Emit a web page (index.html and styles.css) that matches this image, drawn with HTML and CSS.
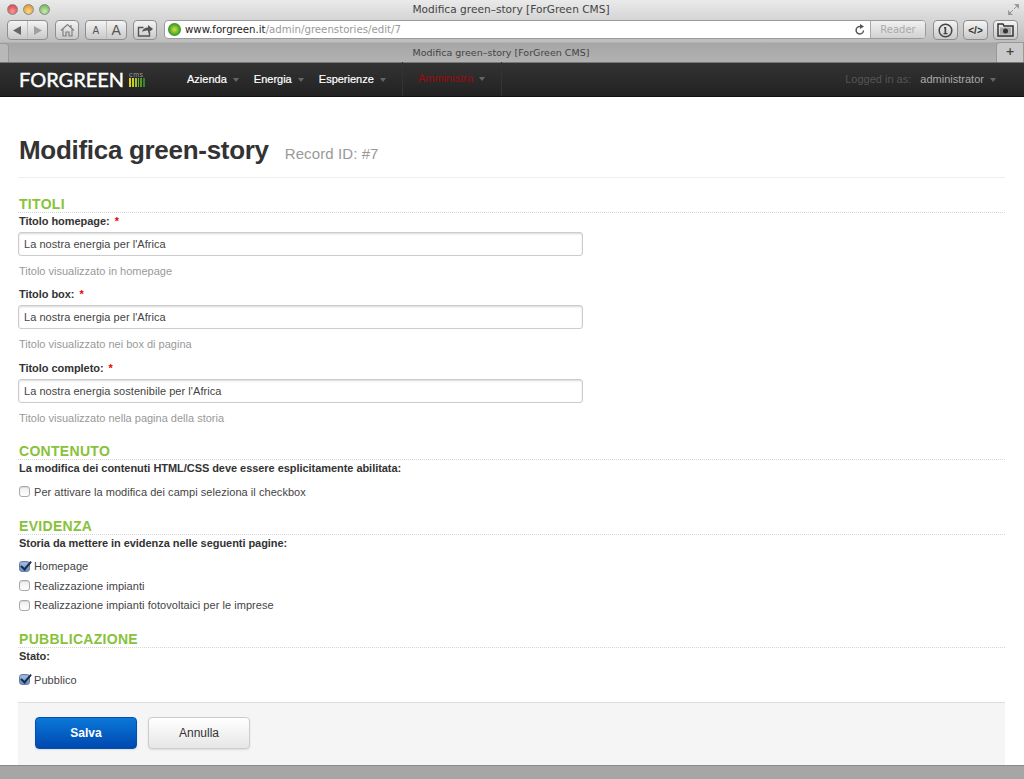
FILE: index.html
```html
<!DOCTYPE html>
<html>
<head>
    <title>Modifica green-story [ForGreen CMS]</title>
    <link rel="stylesheet" href="styles.css">
</head>
<body>
    <div class="browser">
        <div class="titlebar">
            <div class="lights">
                <span class="light red"></span>
                <span class="light orange"></span>
                <span class="light green"></span>
            </div>
            <div class="window-title">Modifica green&#8211;story [ForGreen CMS]</div>
            <svg class="expand" width="11" height="11" viewBox="0 0 11 11"><path d="M0 11V6l5 5zM11 0v5L6 0z" fill="#9a9a9a"/><path d="M2 9l3-3M9 2L6 5" stroke="#9a9a9a"/></svg>
        </div>
        <div class="toolbar">
            <div class="tool tool-nav">
                <span class="tool-part"><svg width="9" height="9" viewBox="0 0 9 9"><path d="M8 0v9L0 4.500z" fill="#666"/></svg></span>
                <span class="tool-part"><svg width="9" height="9" viewBox="0 0 9 9"><path d="M1 0v9l8-4.500z" fill="#a0a0a0"/></svg></span>
            </div>
            <div class="tool tool-home">
                <svg width="15" height="14" viewBox="0 0 15 14"><path d="M1 7.500 7.500 1.500 14 7.500M3 6.500V13h3V9h3v4h3V6.500M11 2v2.500" fill="none" stroke="#808080" stroke-width="1.200"/></svg>
            </div>
            <div class="tool tool-font">
                <span class="tool-part font-small">A</span>
                <span class="tool-part font-big">A</span>
            </div>
            <div class="tool tool-share">
                <svg width="17" height="13" viewBox="0 0 17 13"><path d="M6.500 3.500h-5V12h11V8" fill="none" stroke="#555" stroke-width="1.400"/><path d="M5 8c.5-3 3-4.500 6-4.500V1l5 4-5 4V6.500C8.500 6.500 6.500 7 5 8z" fill="#555"/></svg>
            </div>
            <div class="address">
                <span class="site-dot"></span>
                <span class="url"><b>www.forgreen.it</b>/admin/greenstories/edit/7</span>
                <svg class="reload" width="10" height="11" viewBox="0 0 10 11"><path d="M8.500 6.500A3.700 3.700 0 1 1 5 2.500" fill="none" stroke="#555" stroke-width="1.500"/><path d="M5 0l4 2.500L5 5z" fill="#555"/></svg>
                <span class="reader">Reader</span>
            </div>
            <div class="tool tool-icon">
                <svg width="15" height="15" viewBox="0 0 15 15"><circle cx="7.500" cy="7.500" r="6.300" fill="none" stroke="#444" stroke-width="1.500"/><path d="M6 4h2.200v6H9.500v1.200h-4V10h1V5.200H6z" fill="#444"/></svg>
            </div>
            <div class="tool tool-icon code">&lt;/&gt;</div>
            <div class="tool tool-icon">
                <svg width="17" height="14" viewBox="0 0 17 14"><path d="M1 3V1h5l1 2h9v10H1z" fill="none" stroke="#333" stroke-width="1.500"/><rect x="3" y="4.500" width="11" height="7" fill="#aaa"/><circle cx="8.500" cy="8" r="2.500" fill="#333"/></svg>
            </div>
        </div>
        <div class="tabbar">
            <div class="tab-left"></div>
            <div class="tab-title">Modifica green&#8211;story [ForGreen CMS]</div>
            <div class="tab-plus">+</div>
        </div>
    </div>

    <nav class="navbar">
        <div class="brand">
            <span class="brand-name">FORGREEN</span>
            <span class="brand-mark">
                <span class="brand-cms">cms</span>
                <span class="brand-bars"><i class="b1"></i><i class="b2"></i><i class="b3"></i><i class="b4"></i><i class="b5"></i><i class="b6"></i></span>
            </span>
        </div>
        <ul class="menu">
            <li>Azienda <span class="caret"></span></li>
            <li>Energia <span class="caret"></span></li>
            <li>Esperienze <span class="caret"></span></li>
        </ul>
        <div class="menu-admin">Amministra <span class="caret"></span></div>
        <div class="user">
            <span class="user-label">Logged in as:</span>
            <span class="user-name">administrator</span>
            <span class="caret"></span>
        </div>
    </nav>

    <main class="content">
        <div class="page-header">
            <h1>Modifica green-story</h1>
            <small>Record ID: #7</small>
        </div>

        <form>
            <div class="group">
                <h3 class="section">TITOLI</h3>
                <div class="field">
                    <label class="field-label">Titolo homepage: <em>*</em></label>
                    <input class="text" type="text" value="La nostra energia per l'Africa">
                    <p class="help">Titolo visualizzato in homepage</p>
                </div>
                <div class="field">
                    <label class="field-label">Titolo box: <em>*</em></label>
                    <input class="text" type="text" value="La nostra energia per l'Africa">
                    <p class="help">Titolo visualizzato nei box di pagina</p>
                </div>
                <div class="field">
                    <label class="field-label">Titolo completo: <em>*</em></label>
                    <input class="text" type="text" value="La nostra energia sostenibile per l'Africa">
                    <p class="help">Titolo visualizzato nella pagina della storia</p>
                </div>
            </div>

            <div class="group">
                <h3 class="section">CONTENUTO</h3>
                <label class="field-label">La modifica dei contenuti HTML/CSS deve essere esplicitamente abilitata:</label>
                <div class="checks">
                    <label class="check"><input type="checkbox"> Per attivare la modifica dei campi seleziona il checkbox</label>
                </div>
            </div>

            <div class="group">
                <h3 class="section">EVIDENZA</h3>
                <label class="field-label">Storia da mettere in evidenza nelle seguenti pagine:</label>
                <div class="checks">
                    <label class="check"><input type="checkbox" checked> Homepage</label>
                    <label class="check"><input type="checkbox"> Realizzazione impianti</label>
                    <label class="check"><input type="checkbox"> Realizzazione impianti fotovoltaici per le imprese</label>
                </div>
            </div>

            <div class="group">
                <h3 class="section">PUBBLICAZIONE</h3>
                <label class="field-label">Stato:</label>
                <div class="checks">
                    <label class="check"><input type="checkbox" checked> Pubblico</label>
                </div>
            </div>

            <div class="actions">
                <button type="button" class="btn btn-primary">Salva</button>
                <button type="button" class="btn">Annulla</button>
            </div>
        </form>
    </main>

    <div class="statusbar"></div>
</body>
</html>
```

FILE: styles.css
```css
* { box-sizing: border-box; }
html, body { margin: 0; height: 779px; overflow: hidden; }
body { font-family: "Liberation Sans", Arial, sans-serif; font-size: 11px; color: #333; background: #fff; display: flex; flex-direction: column; }

/* browser chrome */
.browser { height: 63px; flex: none; background: linear-gradient(#eaeaea, #bdbdbd 42px, #a6a6a6 43px, #b2b2b2); font-family: "DejaVu Sans", sans-serif; }
.titlebar { height: 20px; display: flex; align-items: center; padding: 0 5px 2px 7px; }
.lights { display: flex; gap: 5px; width: 50px; flex: none; }
.light { width: 11px; height: 11px; border-radius: 50%; border: 1px solid #8a8a8a; }
.red { background: radial-gradient(circle at 50% 70%, #f79a9a, #d4323a); }
.orange { background: radial-gradient(circle at 50% 70%, #fcd68a, #d98c20); }
.green { background: radial-gradient(circle at 50% 70%, #c6eeb0, #5fa94a); }
.window-title { flex: 1; text-align: center; font-size: 10.600px; color: #444; padding-right: 43px; }
.expand { flex: none; }
.toolbar { height: 22px; display: flex; align-items: flex-start; padding: 0 6px 0 7px; }
.tool { height: 20px; border: 1px solid #8e8e8e; border-radius: 4px; background: linear-gradient(#f4f4f4, #c9c9c9); display: flex; align-items: center; justify-content: center; flex: none; }
.tool-nav { width: 41px; margin-right: 7px; }
.tool-part { flex: 1; height: 100%; display: flex; align-items: center; justify-content: center; }
.tool-part + .tool-part { border-left: 1px solid #bbb; }
.tool-home { width: 24px; margin-right: 6px; }
.tool-font { width: 42px; margin-right: 6px; color: #555; font-family: "Liberation Sans", sans-serif; }
.font-small { font-size: 10px; }
.font-big { font-size: 14px; }
.tool-share { width: 24px; margin-right: 7px; }
.address { width: 762px; height: 19px; margin-right: 7px; flex: none; display: flex; align-items: center; background: #fff; border: 1px solid #9a9a9a; border-radius: 4px; padding-left: 3px; overflow: hidden; }
.site-dot { width: 13px; height: 13px; border-radius: 50%; background: radial-gradient(circle, #c8d43a 10%, #5fb52e 45%, #137a1e 85%); margin-right: 4px; flex: none; }
.url { flex: 1; font-size: 10.200px; color: #999; }
.url b { color: #222; font-weight: 400; }
.reload { margin-right: 5px; flex: none; }
.reader { width: 55px; height: 100%; border-left: 1px solid #aaa; background: linear-gradient(#f1f1f1, #d2d2d2); color: #aaa; font-size: 10px; text-align: center; line-height: 17px; }
.tool-icon { width: 25px; margin-right: 5px; }
.tool-icon:last-child { margin-right: 0; }
.code { font-size: 10px; font-weight: 700; color: #333; font-family: "Liberation Sans", sans-serif; }
.tabbar { height: 21px; display: flex; align-items: flex-end; border-bottom: 1px solid #777; }
.tab-left { width: 9px; height: 19px; border-top: 1px solid #999; border-right: 1px solid #999; border-radius: 0 4px 0 0; background: #b8b8b8; flex: none; }
.tab-title { flex: 1; align-self: center; text-align: center; font-size: 9.500px; color: #444; padding-right: 3px; }
.tab-plus { width: 28px; height: 20px; border: 1px solid #999; border-bottom: 0; border-radius: 4px 0 0 0; background: #c9c9c9; font-size: 11px; font-weight: 700; color: #444; text-align: center; line-height: 18px; flex: none; }

/* site navbar */
.navbar { height: 34px; flex: none; display: flex; align-items: center; padding-bottom: 1px; background: linear-gradient(#333, #222); font-size: 11px; color: #fff; border-bottom: 1px solid #111; }
.brand { width: 187px; padding-left: 19px; display: flex; align-items: center; flex: none; }
.brand-name { font-family: "Lato", sans-serif; font-size: 20px; color: #fff; font-weight: 400; line-height: 1; -webkit-text-stroke: .4px #fff; }
.brand-mark { width: 16px; display: flex; flex-direction: column; margin-left: 5px; }
.brand-cms { font-size: 7px; line-height: 7px; color: #999; letter-spacing: .6px; }
.brand-bars { display: flex; gap: 1px; height: 9px; }
.brand-bars i { flex: 1; }
.b1 { background: #e0d020; }
.b2 { background: #c8cf2a; }
.b3 { background: #9fc52c; }
.b4 { background: #7cb22a; }
.b5 { background: #4f9a28; }
.b6 { background: #2f8526; }
.menu { list-style: none; display: flex; margin: 0; padding: 0; gap: 15px; width: 215px; flex: none; -webkit-text-stroke: .2px #fff; }
.caret { display: inline-block; width: 0; height: 0; border-left: 3.500px solid transparent; border-right: 3.500px solid transparent; border-top: 4px solid #666; margin-left: 3px; vertical-align: middle; -webkit-text-stroke: 0; }
.menu-admin { height: 34px; width: 100px; flex: none; border-left: 1px solid #333; border-right: 1px solid #333; color: #9b0b10; line-height: 33px; padding-left: 15px; }
.user { margin-left: auto; padding-right: 28px; }
.user-label { color: #555; margin-right: 6px; }
.user-name { color: #aaa; }

/* page content */
.content { flex: 1; padding: 0 19px 0 18px; overflow: hidden; min-height: 0; }
.page-header { height: 81px; padding-top: 37px; border-bottom: 1px solid #eee; display: flex; align-items: baseline; padding-left: 1px; margin-bottom: 18px; }
.page-header h1 { margin: 0; font-size: 26px; line-height: 32px; font-weight: 700; color: #333; letter-spacing: -.3px; }
.page-header small { margin-left: 16px; font-size: 15px; color: #999; letter-spacing: .1px; }
.group { margin-top: 16px; }
.section { margin: 0; height: 17px; line-height: 17px; padding-left: 1px; font-size: 14px; font-weight: 700; letter-spacing: .3px; color: #88c23a; border-bottom: 1px dotted #d5d5d5; }
.field { margin-bottom: 8.400px; }
.field:last-child { margin-bottom: 0; padding-bottom: 2.250px; }
.field-label { display: block; font-size: 11px; font-weight: 700; line-height: 17px; color: #333; padding-left: 1px; letter-spacing: -.05px; }
.field-label em { color: #e00; font-style: normal; margin-left: 2px; }
.text { display: block; width: 565px; height: 24px; margin-top: 2px; padding: 0 5px; font: 11px "Liberation Sans", sans-serif; letter-spacing: .05px; color: #444; border: 1px solid #ccc; border-radius: 3px; box-shadow: inset 0 1px 2px rgba(0,0,0,.15); }
.help { margin: 8px 0 0; font-size: 11px; line-height: 14px; color: #999; padding-left: 1px; }
.checks { margin-top: 5px; }
.check { display: flex; align-items: center; height: 19.500px; font-size: 11px; letter-spacing: .05px; color: #444; }
.check input { appearance: none; position: relative; width: 11px; height: 11px; margin: 0 4px 0 1px; border: 1px solid #aaa; border-radius: 3px; background: linear-gradient(#eee, #fff); box-shadow: inset 0 1px 1px rgba(0,0,0,.1); }
.check input:checked { background: linear-gradient(#a9c4ea, #5f8fd0); border-color: #6c7f9e; }
.check input:checked::after { content: ""; position: absolute; left: 2.500px; top: -3px; width: 4px; height: 9px; border-right: 2px solid #1d2c44; border-bottom: 2px solid #1d2c44; transform: rotate(40deg); }
.actions { margin-top: 12px; height: 72px; background: #f5f5f5; border-top: 1px solid #ddd; display: flex; align-items: flex-start; padding: 14px 17px 0; gap: 11px; }
.btn { width: 102px; height: 32px; border: 1px solid #ccc; border-radius: 4px; background: linear-gradient(#fff, #e6e6e6); color: #333; font: 12px "Liberation Sans", sans-serif; box-shadow: 0 1px 2px rgba(0,0,0,.1); }
.btn-primary { background: linear-gradient(#0a78d8, #0048b0); border-color: #0050b0; color: #fff; font-weight: 700; }

.statusbar { height: 14px; flex: none; background: #a6a6a6; border-top: 1px solid #8a8a8a; }
```
